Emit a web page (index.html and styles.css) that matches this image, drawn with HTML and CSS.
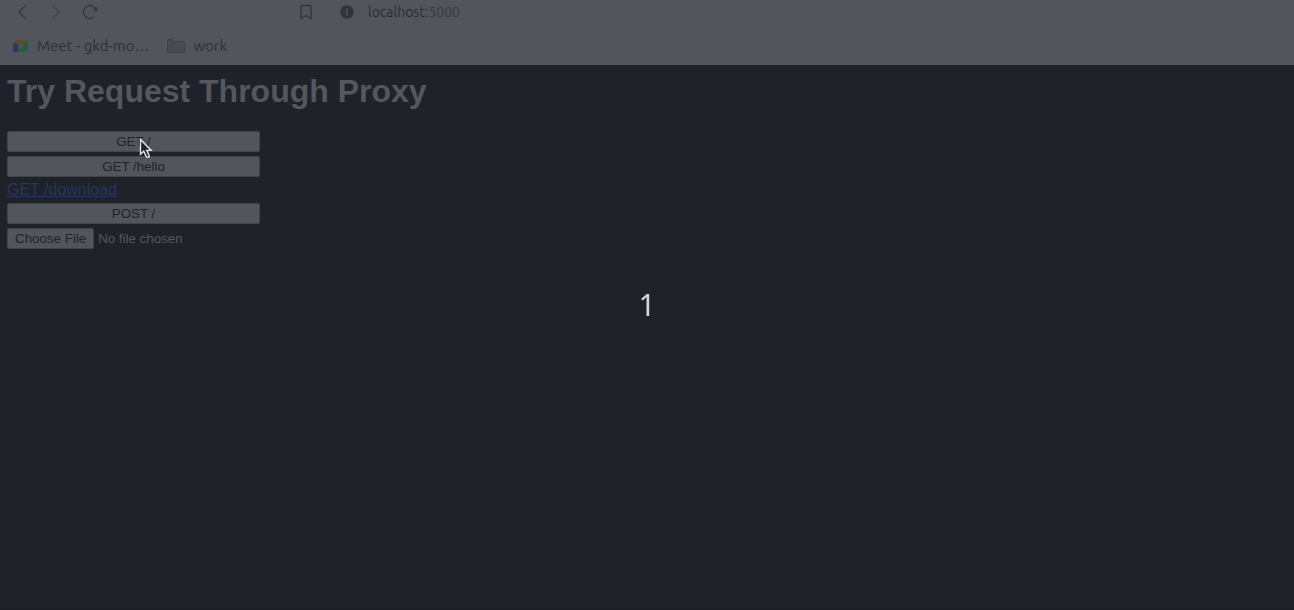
FILE: index.html
```html
<!DOCTYPE html>
<html lang="en">
<head>
<meta charset="utf-8">
<title>Try Request Through Proxy</title>
<link rel="stylesheet" href="styles.css">
</head>
<body>
<header class="browser">
  <nav class="toolbar" aria-label="Navigation">
    <div class="nav-buttons">
      <button class="icon-button" aria-label="Back"><svg width="18" height="18" viewBox="0 0 18 18"><path d="M12.5 2.5 6 9l6.500 6.500"/></svg></button>
      <button class="icon-button faded" aria-label="Forward"><svg width="18" height="18" viewBox="0 0 18 18"><path d="M5.500 2.500 12 9l-6.500 6.500"/></svg></button>
      <button class="icon-button" aria-label="Reload"><svg width="18" height="18" viewBox="0 0 18 18"><path d="M12.800 14.200A6.500 6.500 0 1 1 15 7"/><path class="solid" d="m16 3.200.4 5-5-.4 2.600-1.400z"/></svg></button>
    </div>
    <button class="icon-button" aria-label="Bookmark this page"><svg width="18" height="18" viewBox="0 0 18 18"><path d="M4 3.700q0-1.200 1.200-1.200h7.600q1.200 0 1.200 1.200v12.100l-5-3.300-5 3.300z"/></svg></button>
    <button class="address"><svg width="14" height="14" viewBox="0 0 14 14"><circle class="info-disc" cx="7" cy="7" r="6.700"/><path class="info-mark" d="M7 3.200v1.500M6 6.400h1v4"/></svg><span>localhost<span class="port">:5000</span></span></button>
  </nav>
  <nav class="bookmarks" aria-label="Bookmarks">
    <a class="bookmark" href="#meet"><svg width="16" height="16" viewBox="0 0 16 16"><path fill="#263b60" d="M0 6h5v8H1q-1 0-1-1z"/><path fill="#653b30" d="M0 6l4-4v4z"/><path fill="#5b4a35" d="M4 2h7q2 0 2 2v2H4z"/><path fill="#275a3e" d="M5 10.500h5V6l4-3h1v10h-1l-2-1q0 2-1 2H5z"/><path fill="#4d5158" d="M5 6h5v4.500H5z"/></svg>Meet - gkd-mo…</a>
    <a class="bookmark" href="#work"><svg width="18" height="16" viewBox="0 0 18 16"><path fill="#494b51" stroke="#3f4248" d="M.5 13.500v-11q0-1 1-1h4l2 2h9q1 0 1 1v9q0 1-1 1h-15q-1 0-1-1z"/><path fill="none" stroke="#3f4248" d="M3 5.500h4l2-2"/></svg>work</a>
  </nav>
</header>
<main class="page">
  <h1 class="title">Try Request Through Proxy</h1>
  <div class="requests">
    <button class="request">GET /</button>
    <button class="request">GET /hello</button>
    <a class="download" href="#download">GET /download</a>
    <button class="request">POST /</button>
    <input class="file" type="file" aria-label="File to upload">
  </div>
</main>
<div class="countdown" role="timer">1</div>
<svg class="pointer" width="16" height="22" viewBox="0 0 16 22"><path d="M1.500 1.500v14.700l3.200-3 2.500 5.200q1 1.400 2.500.7 1-.8.300-2l-2.300-4.700h4.500z"/></svg>
</body>
</html>
```
FILE: styles.css
```css
* {
  box-sizing: border-box;
}

body {
  margin: 0;
  min-height: 100vh;
  background: #1f2229;
  border-bottom: 2px solid #1d1e23;
  color: #54575e;
  font-family: "Liberation Sans", Arial, sans-serif;
}

button {
  margin: 0;
  font-family: inherit;
}

.browser {
  height: 65px;
  background: #52555c;
  color: #2d3036;
  font-family: Ubuntu, "Noto Sans", sans-serif;
}

.toolbar {
  display: flex;
  align-items: center;
  height: 24px;
  padding-left: 13px;
}

.nav-buttons {
  display: flex;
  gap: 16px;
  margin-right: 198px;
}

.icon-button {
  display: flex;
  padding: 0;
  border: 0;
  background: none;
  color: #32363f;
}

.icon-button path {
  fill: none;
  stroke: currentColor;
  stroke-width: 1.4;
}

.icon-button .solid {
  fill: currentColor;
  stroke: none;
}

.faded {
  color: #41444b;
}

.address {
  display: flex;
  align-items: center;
  gap: 14px;
  margin-left: 25px;
  padding: 0;
  border: 0;
  background: none;
  color: #292c32;
  font-size: 14px;
  line-height: 20px;
}

.port {
  color: #36393f;
}

.info-disc {
  fill: #30343e;
}

.info-mark {
  fill: none;
  stroke: #52555c;
  stroke-width: 1.6;
}

.bookmarks {
  display: flex;
  gap: 18px;
  padding: 12px 13px 0;
}

.bookmark {
  display: flex;
  align-items: center;
  gap: 8px;
  color: inherit;
  font-size: 15px;
  line-height: 20px;
  text-decoration: none;
}

.page {
  padding: 8px 7px;
}

.title {
  margin: 0 0 21px;
  font-size: 32px;
  line-height: 37px;
}

.requests {
  display: grid;
  gap: 4px;
  width: 253px;
}

.request,
.file::file-selector-button {
  height: 21px;
  padding: 0 7px;
  border: 1px solid #41444a;
  border-radius: 2px;
  background: #52555c;
  color: #202329;
  font-family: inherit;
  line-height: 19px;
}

.download {
  justify-self: start;
  color: #26365f;
  font-size: 16px;
  line-height: 18px;
}

.file {
  width: 100%;
  height: 21px;
  color: #54575e;
  font-family: inherit;
  line-height: 21px;
}

.file::file-selector-button {
  margin: 0 4px 0 0;
}

.countdown {
  position: fixed;
  inset: 0;
  display: grid;
  place-items: center;
  color: #d4d7dc;
  font-family: "Noto Sans", sans-serif;
  font-size: 30px;
  line-height: 40px;
  pointer-events: none;
}

.pointer {
  position: absolute;
  left: 139px;
  top: 138px;
  fill: #202329;
  stroke: #e4e5e7;
  stroke-width: 1.4;
  pointer-events: none;
}
```
